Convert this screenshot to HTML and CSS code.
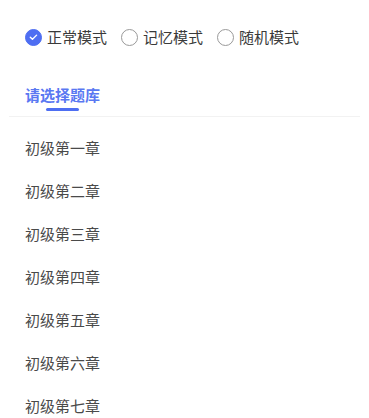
FILE: index.html
```html
<!DOCTYPE html>
<html lang="zh-CN">
<head>
  <meta charset="UTF-8" />
  <meta name="viewport" content="width=device-width, initial-scale=1" />
  <title>题库</title>
  <link rel="stylesheet" href="styles.css">
</head>
<body>

<div class="modes">
  <label class="mode checked">
    <span class="radio">
      <svg viewBox="0 0 16 16" width="16" height="16"><path d="M4.6 8.2l2.3 2.2 4.4-4.4" fill="none" stroke="#fff" stroke-width="1.5" stroke-linecap="round" stroke-linejoin="round"/></svg>
    </span>
    正常模式
  </label>
  <label class="mode"><span class="radio"></span>记忆模式</label>
  <label class="mode"><span class="radio"></span>随机模式</label>
</div>

<div class="tabs">
  <div class="tab active">
    <span>请选择题库</span>
    <i class="bar"></i>
  </div>
</div>

<ul class="chapters">
  <li>初级第一章</li>
  <li>初级第二章</li>
  <li>初级第三章</li>
  <li>初级第四章</li>
  <li>初级第五章</li>
  <li>初级第六章</li>
  <li>初级第七章</li>
</ul>

</body>
</html>
```

FILE: styles.css
```css
body {
  margin: 0;
  font-family: "Noto Sans CJK SC", "Noto Sans", sans-serif;
  background: #fff;
  color: #333;
}
.modes {
  display: flex;
  align-items: center;
  gap: 14px;
  padding: 26px 25px 0;
  font-size: 15px;
  line-height: 22px;
}
.mode {
  display: flex;
  align-items: center;
  gap: 5px;
  color: #3a3a3a;
}
.radio {
  box-sizing: border-box;
  width: 17px;
  height: 17px;
  border: 1px solid #999;
  border-radius: 50%;
  display: flex;
  align-items: center;
  justify-content: center;
}
.mode.checked .radio {
  background: #4e6ef2;
  border-color: #4e6ef2;
}
.tabs {
  margin: 34px 9px 0;
  padding: 0 16px 5px;
  border-bottom: 1px solid #f2f2f2;
}
.tab {
  display: inline-flex;
  flex-direction: column;
  align-items: center;
  font-size: 15px;
  line-height: 22px;
  font-weight: 600;
  color: #5a78f2;
}
.tab .bar {
  width: 33px;
  height: 3px;
  margin-top: 2px;
  border-radius: 2px;
  background: #4e6ef2;
}
.chapters {
  list-style: none;
  margin: 0;
  padding: 9px 0 0;
}
.chapters li {
  padding-left: 25px;
  font-size: 15px;
  line-height: 43px;
  color: #4a4a4a;
}
```
